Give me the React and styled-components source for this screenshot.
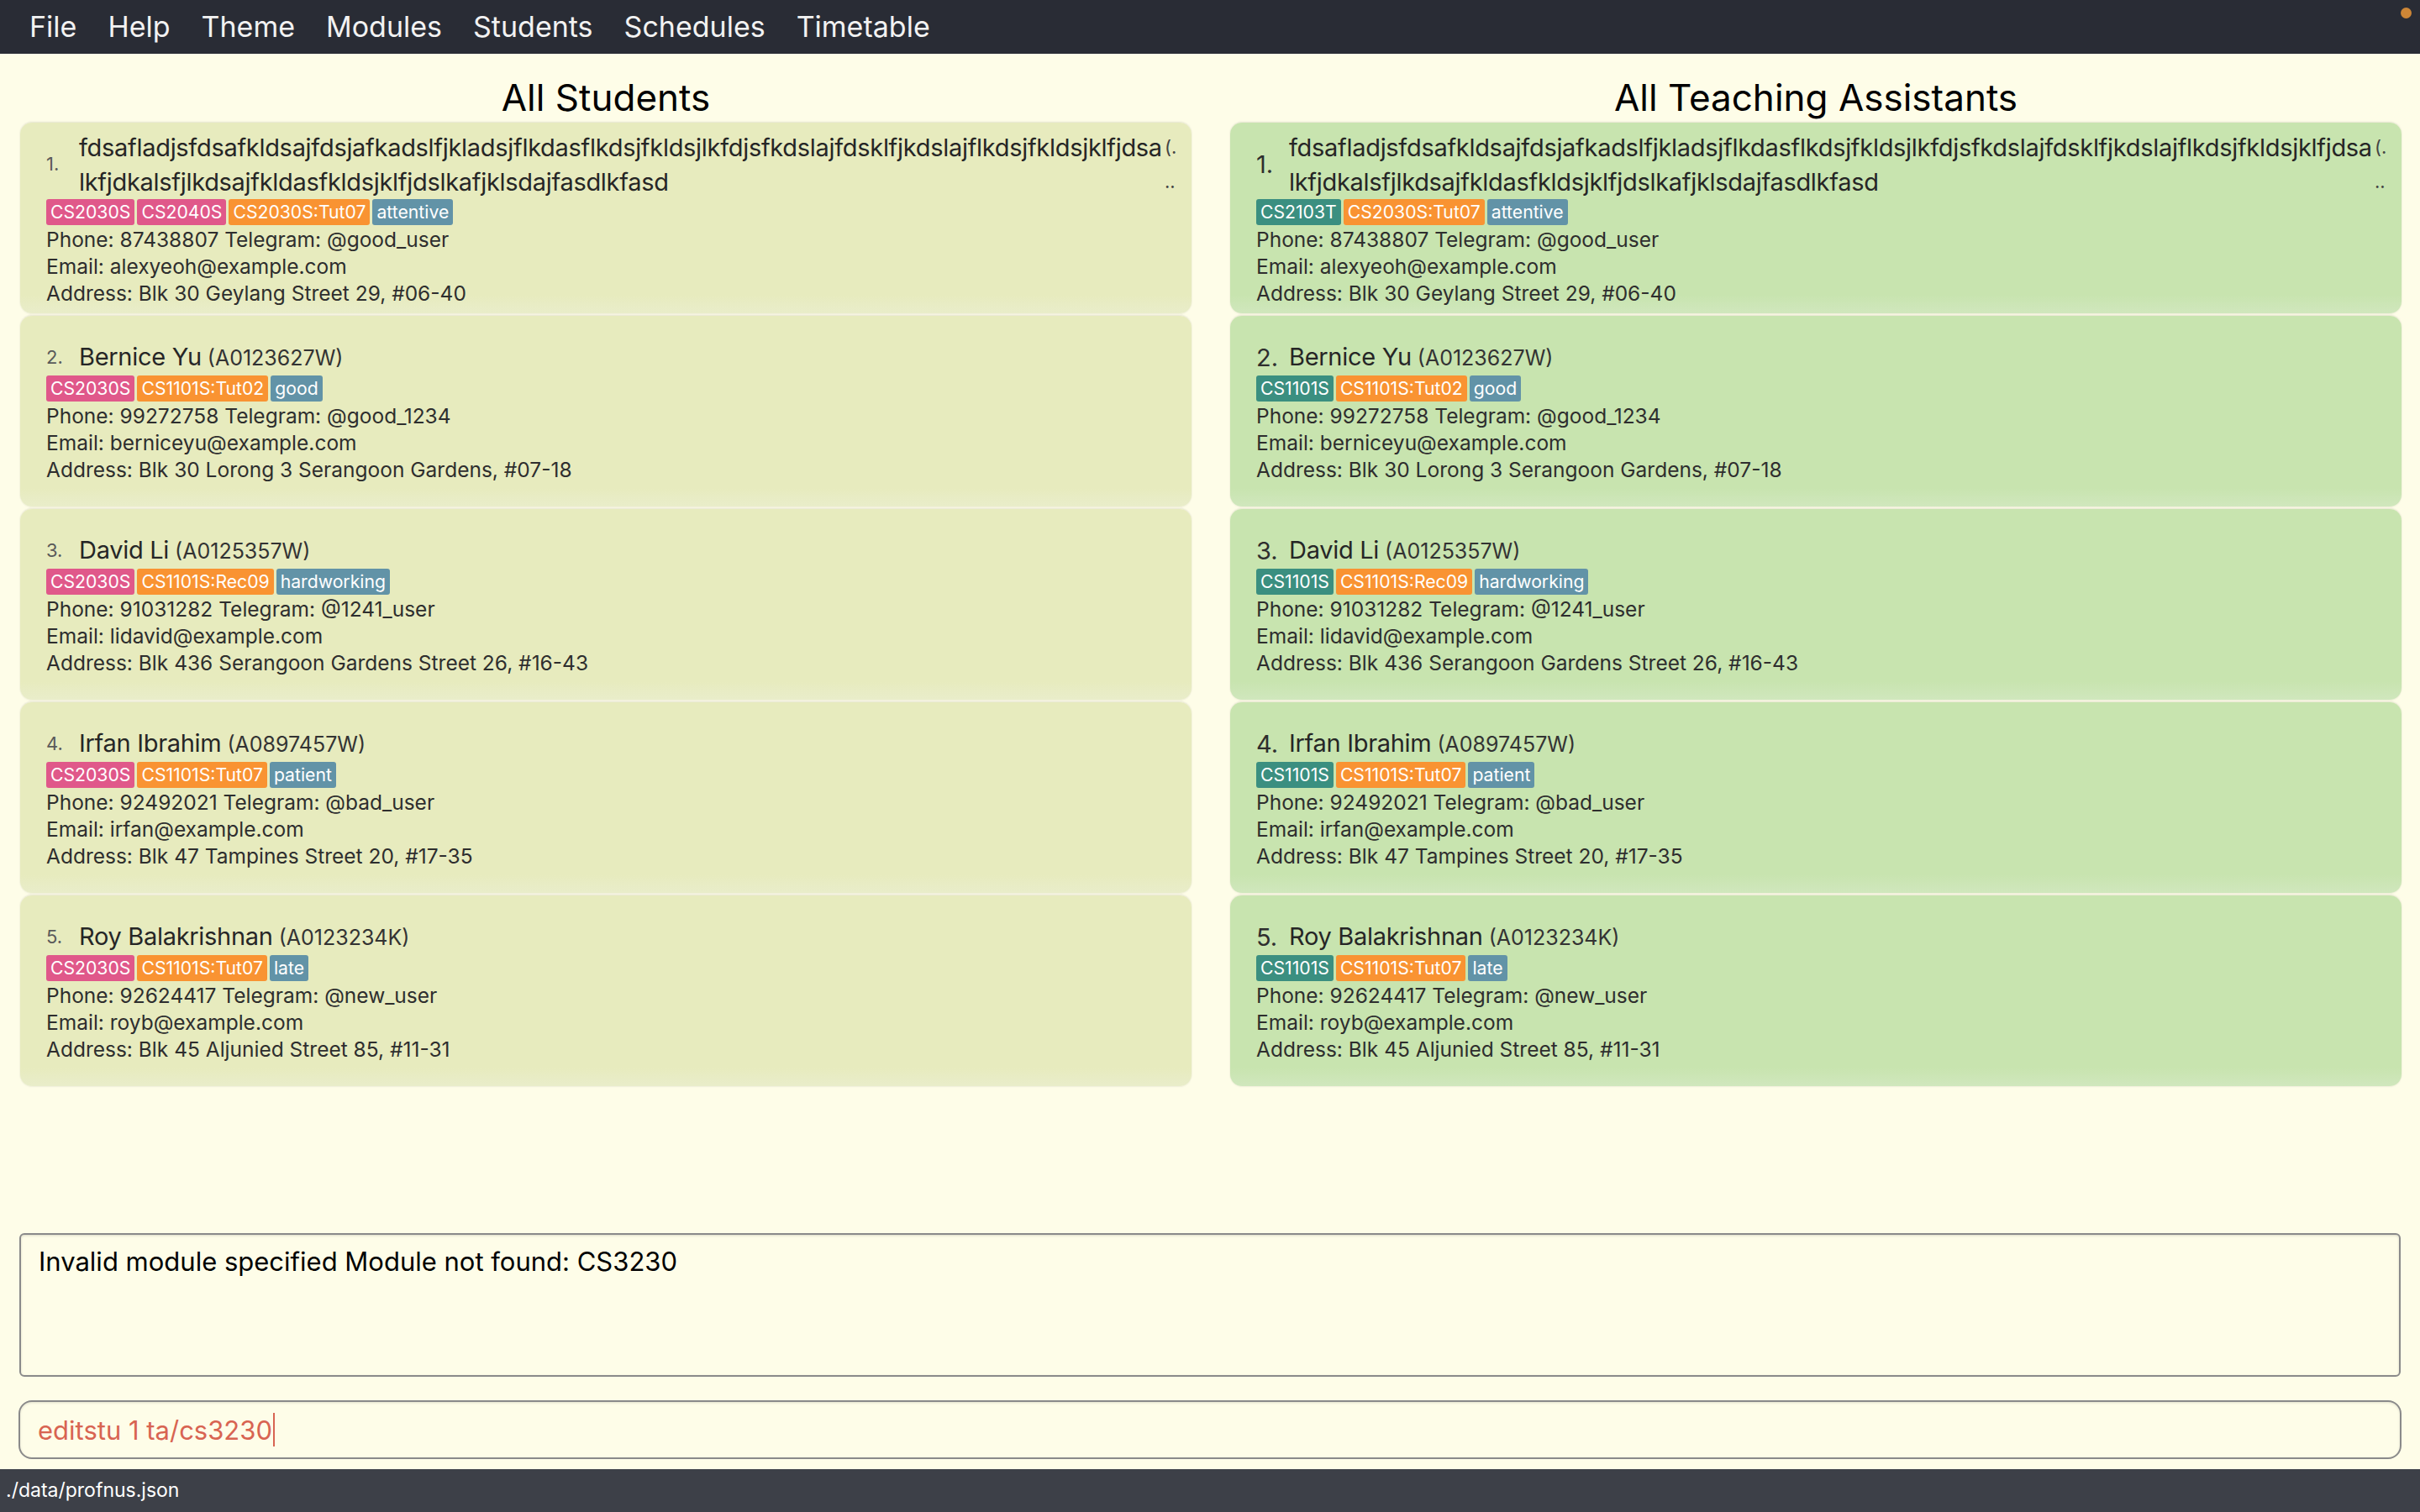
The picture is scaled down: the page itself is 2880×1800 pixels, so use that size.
import React from 'react';
import styled, { createGlobalStyle } from 'styled-components';

const GlobalStyle = createGlobalStyle`
    html, body {
        margin: 0;
        padding: 0;
        background: #fefde8;
        font-family: Inter, "Liberation Sans", sans-serif;
    }
`;

const TAG_COLORS = {
    module: "#e0588a",
    taModule: "#3b8f80",
    tutorial: "#f99332",
    remark: "#6293a7",
};

const menus = ["File", "Help", "Theme", "Modules", "Students", "Schedules", "Timetable"];

const LONG_NAME = "fdsafladjsfdsafkldsajfdsjafkadslfjkladsjflkdasflkdsjfkldsjlkfdjsfkdslajfdsklfjkdslajflkdsjfkldsjklfjdsa lkfjdkalsfjlkdsajfkldasfkldsjklfjdslkafjklsdajfasdlkfasd";

const people = [
    { name: LONG_NAME, id: "(A0123456X)", squeezed: true, mods: ["CS2030S", "CS2040S"], taMods: ["CS2103T"], tut: "CS2030S:Tut07", remark: "attentive", phone: "87438807", tele: "@good_user", email: "alexyeoh@example.com", address: "Blk 30 Geylang Street 29, #06-40" },
    { name: "Bernice Yu", id: "(A0123627W)", mods: ["CS2030S"], taMods: ["CS1101S"], tut: "CS1101S:Tut02", remark: "good", phone: "99272758", tele: "@good_1234", email: "berniceyu@example.com", address: "Blk 30 Lorong 3 Serangoon Gardens, #07-18" },
    { name: "David Li", id: "(A0125357W)", mods: ["CS2030S"], taMods: ["CS1101S"], tut: "CS1101S:Rec09", remark: "hardworking", phone: "91031282", tele: "@1241_user", email: "lidavid@example.com", address: "Blk 436 Serangoon Gardens Street 26, #16-43" },
    { name: "Irfan Ibrahim", id: "(A0897457W)", mods: ["CS2030S"], taMods: ["CS1101S"], tut: "CS1101S:Tut07", remark: "patient", phone: "92492021", tele: "@bad_user", email: "irfan@example.com", address: "Blk 47 Tampines Street 20, #17-35" },
    { name: "Roy Balakrishnan", id: "(A0123234K)", mods: ["CS2030S"], taMods: ["CS1101S"], tut: "CS1101S:Tut07", remark: "late", phone: "92624417", tele: "@new_user", email: "royb@example.com", address: "Blk 45 Aljunied Street 85, #11-31" },
];

function PersonCard({ person, index, ta }) {
    const mods = ta ? person.taMods : person.mods;
    return (
        <Card $ta={ta}>
            <NameRow>
                <Index $ta={ta}>{index}.</Index>
                <Name>
                    {person.name}
                    {!person.squeezed && <Id> {person.id}</Id>}
                </Name>
                {person.squeezed && (
                    <SqueezedId>
                        <span>(.</span>
                        <span>..</span>
                    </SqueezedId>
                )}
            </NameRow>
            <Tags>
                {mods.map(m => (
                    <Tag key={m} $color={ta ? TAG_COLORS.taModule : TAG_COLORS.module}>{m}</Tag>
                ))}
                <Tag $color={TAG_COLORS.tutorial}>{person.tut}</Tag>
                <Tag $color={TAG_COLORS.remark}>{person.remark}</Tag>
            </Tags>
            <Detail>Phone: {person.phone} Telegram: {person.tele}</Detail>
            <Detail>Email: {person.email}</Detail>
            <Detail>Address: {person.address}</Detail>
        </Card>
    );
}

function App() {
    return (
        <>
            <GlobalStyle />
            <Page>
                <MenuBar>
                    {menus.map(m => <MenuItem key={m}>{m}</MenuItem>)}
                    <Dot />
                </MenuBar>
                <Panels>
                    <Panel>
                        <Heading>All Students</Heading>
                        <CardList>
                            {people.map((p, i) => <PersonCard key={i} person={p} index={i + 1} />)}
                        </CardList>
                    </Panel>
                    <Panel>
                        <Heading>All Teaching Assistants</Heading>
                        <CardList>
                            {people.map((p, i) => <PersonCard key={i} person={p} index={i + 1} ta />)}
                        </CardList>
                    </Panel>
                </Panels>
                <Bottom>
                    <ResultBox>Invalid module specified Module not found: CS3230</ResultBox>
                    <CommandBox>
                        <CommandText>editstu 1 ta/cs3230</CommandText>
                        <Caret />
                    </CommandBox>
                </Bottom>
                <StatusBar>./data/profnus.json</StatusBar>
            </Page>
        </>
    );
}

const Page = styled.div`
    height: 100vh;
    display: flex;
    flex-direction: column;
    background: #fefde8;
    overflow: hidden;
`;

const MenuBar = styled.div`
    position: relative;
    height: 64px;
    flex-shrink: 0;
    background: #292c35;
    display: flex;
    align-items: center;
    gap: 37px;
    padding-left: 35px;
`;

const MenuItem = styled.div`
    color: #f2f2f2;
    font-size: 34px;
    line-height: 40px;
`;

const Dot = styled.div`
    position: absolute;
    top: 9px;
    right: 10px;
    width: 13px;
    height: 13px;
    border-radius: 50%;
    background: #cd8636;
`;

const Panels = styled.div`
    flex: 1;
    display: grid;
    grid-template-columns: 1fr 1fr;
    column-gap: 46px;
    padding: 0 22px 0 24px;
`;

const Panel = styled.div`
    display: flex;
    flex-direction: column;
    min-width: 0;
`;

const Heading = styled.div`
    height: 82px;
    box-sizing: border-box;
    padding-top: 22px;
    line-height: 60px;
    text-align: center;
    font-size: 44px;
    color: #000;
`;

const CardList = styled.div`
    display: flex;
    flex-direction: column;
    gap: 3px;
`;

const Card = styled.div`
    height: 227px;
    box-sizing: border-box;
    border-radius: 14px;
    padding: 0 18px 0 31px;
    display: flex;
    flex-direction: column;
    justify-content: center;
    background: ${p => p.$ta
        ? "linear-gradient(to bottom, #c8e4af 0, #c8e4af calc(100% - 22px), #d0e7bd 100%)"
        : "linear-gradient(to bottom, #e7ebbe 0, #e7ebbe calc(100% - 22px), #e9edca 100%)"};
    box-shadow: 0 -1px 2px rgba(0, 0, 0, 0.1), 0 1px 2px rgba(0, 0, 0, 0.06);
    color: #2e2e2e;
`;

const NameRow = styled.div`
    display: flex;
    align-items: center;
`;

const Index = styled.div`
    flex-shrink: 0;
    width: 39px;
    font-size: ${p => p.$ta ? "29px" : "22px"};
    color: ${p => p.$ta ? "#2e2e2e" : "#5a5a5a"};
    line-height: 41px;
`;

const Name = styled.div`
    flex: 1;
    min-width: 0;
    font-size: 29px;
    line-height: 41px;
    color: #262626;
    letter-spacing: -0.3px;
`;

const Id = styled.span`
    font-size: 25px;
    color: #333;
    letter-spacing: 0;
`;

const SqueezedId = styled.div`
    flex-shrink: 0;
    width: 14px;
    margin-left: 12px;
    display: flex;
    flex-direction: column;
    font-size: 22px;
    line-height: 41px;
    color: #444;
    white-space: nowrap;
`;

const Tags = styled.div`
    display: flex;
    gap: 3px;
    margin: 0 0 1px 0;
`;

const Tag = styled.span`
    background: ${p => p.$color};
    color: #fff;
    font-size: 21.2px;
    height: 31px;
    line-height: 31px;
    padding: 0 5px;
    border-radius: 3px;
`;

const Detail = styled.div`
    font-size: 24.5px;
    line-height: 32px;
    color: #2e2e2e;
`;

const Bottom = styled.div`
    display: flex;
    flex-direction: column;
    gap: 28px;
    padding: 0 23px 12px 23px;
`;

const ResultBox = styled.div`
    height: 171px;
    box-sizing: border-box;
    border: 2px solid #8a8a8a;
    border-radius: 6px;
    padding: 12px 21px;
    font-size: 31px;
    line-height: 40px;
    color: #000;
    box-shadow: inset 0 1px 3px rgba(0, 0, 0, 0.15);
`;

const CommandBox = styled.div`
    height: 70px;
    box-sizing: border-box;
    border: 2px solid #8a8a8a;
    border-radius: 16px;
    padding: 0 21px;
    display: flex;
    align-items: center;
    margin: 0 -1px;
    box-shadow: inset 0 1px 3px rgba(0, 0, 0, 0.12);
`;

const CommandText = styled.span`
    font-size: 31px;
    color: #d86452;
`;

const Caret = styled.span`
    width: 2px;
    height: 40px;
    background: #d86452;
    margin-left: 1px;
`;

const StatusBar = styled.div`
    height: 51px;
    flex-shrink: 0;
    background: #3d4048;
    color: #fff;
    font-size: 23px;
    line-height: 51px;
    padding-left: 7px;
`;

export default App;
